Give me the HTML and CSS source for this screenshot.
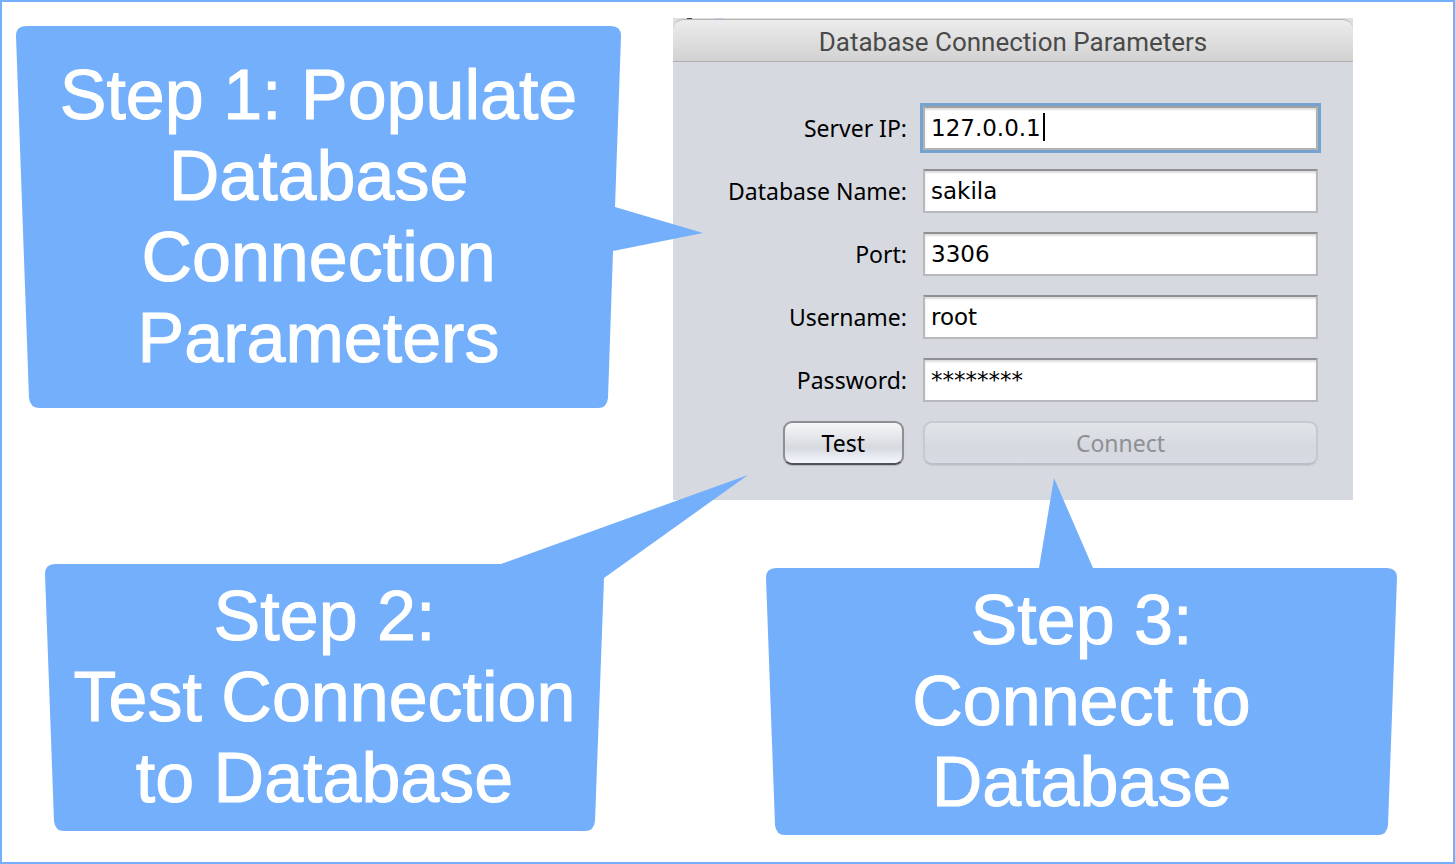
FILE: index.html
```html
<!DOCTYPE html>
<html lang="en">
<head>
<meta charset="utf-8">
<meta name="viewport" content="width=device-width, initial-scale=1">
<title>Database Connection Parameters</title>
<link rel="stylesheet" href="styles.css">
</head>
<body>
<main class="guide">
  <div class="row row-top">
    <section class="callout callout-populate">
      <svg class="callout-shape" viewBox="0 0 605 382" preserveAspectRatio="none" aria-hidden="true">
        <path d="M10 0H595Q605 0 605 10L599 181L687 207L597 225L592 372Q591 382 582 382H24Q14 382 13 372L0 10Q0 0 10 0Z"/>
      </svg>
      <p class="callout-text">Step 1: Populate<br>Database<br>Connection<br>Parameters</p>
    </section>
    <section class="dialog" aria-labelledby="dialog-title">
      <div class="dialog-frame">
        <h1 class="dialog-title" id="dialog-title">Database Connection Parameters</h1>
      </div>
      <form class="form">
        <label class="label" for="server">Server IP:</label>
        <div class="field-wrap">
          <input class="field field-active" id="server" type="text" value="127.0.0.1">
          <span class="caret"></span>
        </div>
        <label class="label" for="database">Database Name:</label>
        <input class="field" id="database" type="text" value="sakila">
        <label class="label" for="port">Port:</label>
        <input class="field" id="port" type="text" value="3306">
        <label class="label" for="username">Username:</label>
        <input class="field" id="username" type="text" value="root">
        <label class="label" for="password">Password:</label>
        <input class="field" id="password" type="text" autocomplete="off" value="********">
        <button class="button button-test" type="button">Test</button>
        <button class="button button-connect" type="submit" disabled>Connect</button>
      </form>
    </section>
  </div>
  <div class="row row-bottom">
    <section class="callout">
      <svg class="callout-shape" viewBox="0 0 559 267" preserveAspectRatio="none" aria-hidden="true">
        <path d="M10 0H456L703 -89L559 14L550 257Q549 267 540 267H19Q10 267 9 257L0 10Q0 0 10 0Z"/>
      </svg>
      <p class="callout-text">Step 2:<br>Test Connection<br>to Database</p>
    </section>
    <section class="callout callout-connect">
      <svg class="callout-shape" viewBox="0 0 631 267" preserveAspectRatio="none" aria-hidden="true">
        <path d="M10 0H273L288 -90L327 0H621Q631 0 631 10L622 257Q621 267 612 267H19Q10 267 9 257L0 10Q0 0 10 0Z"/>
      </svg>
      <p class="callout-text">Step 3:<br>Connect to<br>Database</p>
    </section>
  </div>
</main>
</body>
</html>
```

FILE: styles.css
```css
* {
  box-sizing: border-box;
}

body {
  margin: 0;
  background: #fff;
}

.guide {
  min-height: 100vh;
  padding-top: 16px;
  border: 2px solid #73affb;
}

.row {
  display: grid;
  align-items: start;
}

.row-top {
  grid-template-columns: 605fr 680fr;
  column-gap: 52px;
  padding: 0 100px 0 14px;
}

.row-bottom {
  grid-template-columns: 559fr 631fr;
  column-gap: 162px;
  padding: 64px 56px 24px 43px;
}

/* Callouts */

.callout {
  position: relative;
  z-index: 1;
  padding: 12px 0;
}

.callout-populate {
  margin-top: 8px;
  padding: 29px 0;
}

.callout-connect {
  margin-top: 4px;
}

.callout-shape {
  position: absolute;
  inset: 0;
  width: 100%;
  height: 100%;
  overflow: visible;
  fill: #73affb;
  pointer-events: none;
}

.callout-text {
  position: relative;
  margin: 0;
  color: #fff;
  font: 70px/81px "Liberation Sans", Arial, sans-serif;
  text-align: center;
  -webkit-text-stroke: 1px #fff;
}

/* Dialog */

.dialog {
  background: #d6d9e0;
}

.dialog-frame {
  padding-top: 1px;
  background:
    linear-gradient(#444, #444) 14px 0 / 5px 2px no-repeat,
    linear-gradient(#c9c9ee, #c9c9ee) 42px 0 / 9px 2px no-repeat,
    #e0e0e0;
}

.dialog-title {
  margin: 0;
  padding-top: 4px;
  border-top: 1px solid #b4b4b4;
  border-bottom: 1px solid #b0b0b0;
  border-radius: 10px 10px 0 0;
  background: linear-gradient(#ececec, #d2d2d2);
  color: #4a4a4a;
  font: 26px/37px Roboto, "Open Sans", sans-serif;
  text-align: center;
}

.form {
  display: grid;
  grid-template-columns: 199fr 395fr;
  gap: 19px 16px;
  align-items: center;
  padding: 44px 35px 35px;
}

.label,
.button {
  color: #000;
  font: 23px/32px "Noto Sans", sans-serif;
}

.label {
  text-align: right;
  white-space: nowrap;
}

.field-wrap {
  position: relative;
}

.field {
  display: block;
  width: 100%;
  height: 44px;
  padding: 0 6px;
  border: 2px solid #b8b9bc;
  border-top-color: #8f9094;
  border-radius: 0;
  outline: none;
  background: #fff;
  box-shadow: inset 0 2px 2px #ddd;
  color: #000;
  font: 23px/32px "DejaVu Sans", sans-serif;
}

.field-active,
.field:focus {
  border-color: #b3b3b3;
  border-top-color: #a0a0a0;
  box-shadow: 0 0 0 3px #74a3d1, inset 0 2px 2px #ddd;
}

.caret {
  position: absolute;
  top: 7px;
  left: 120px;
  width: 2px;
  height: 28px;
  background: #000;
}

.button {
  height: 44px;
  padding: 0 37px;
  border: 2px solid #8d8f95;
  border-bottom-color: #4f5157;
  border-radius: 9px;
  background: linear-gradient(#f6f7f9, #dfe1e5 45%, #d6d9df 62%, #f6f8ff);
  box-shadow: 0 1px 1px #b5b8be;
}

.button-test {
  justify-self: end;
  margin-right: 3px;
}

.button-connect {
  border-color: #c6c9ce;
  border-bottom-color: #bbbec6;
  background: linear-gradient(#e1e4e8, #d5d8df 60%, #d8dbe3);
  box-shadow: 0 1px 1px #c8cbd1;
  color: #8e9093;
}
```
